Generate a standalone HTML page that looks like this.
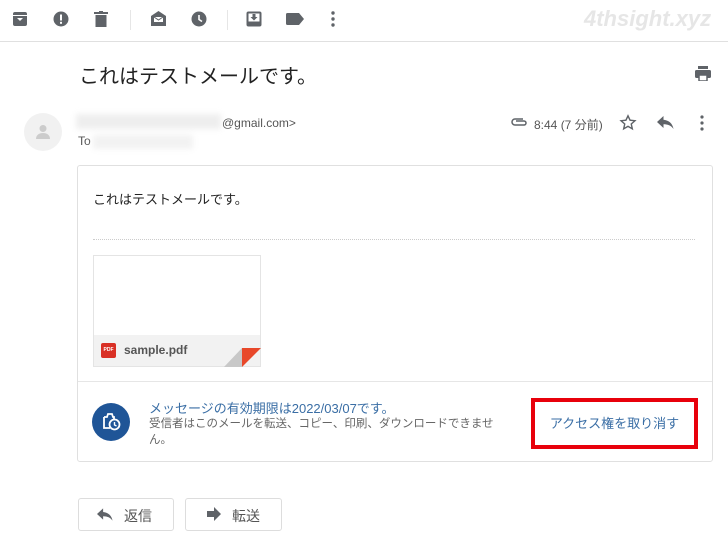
<!DOCTYPE html>
<html><head><meta charset="utf-8"><style>
*{margin:0;padding:0;box-sizing:border-box}
body{width:728px;height:550px;background:#fff;font-family:"Liberation Sans","Noto Sans CJK JP",sans-serif;position:relative;overflow:hidden;color:#222}
.a{position:absolute}
svg{display:block}
</style></head><body>
<div class="a" style="left:0;top:41px;width:728px;height:1px;background:#e0e0e0"></div>
<div class="a" style="left:130px;top:10px;width:1px;height:20px;background:#e6e6e6"></div>
<div class="a" style="left:227px;top:10px;width:1px;height:20px;background:#e6e6e6"></div>
<svg class="a" style="left:12px;top:11px" width="16" height="16" viewBox="0 0 16 16"><rect x="1" y="1" width="14" height="14" rx="2" fill="#5f6368"/><path d="M5 7h6l-3 3z" fill="#fff"/><rect x="1" y="4" width="14" height="1" fill="#fff"/></svg>
<svg class="a" style="left:53px;top:11px" width="16" height="16" viewBox="0 0 16 16"><circle cx="8" cy="8" r="7.5" fill="#5f6368"/><rect x="7" y="3.5" width="2" height="6" fill="#fff"/><rect x="7" y="10.8" width="2" height="2" fill="#fff"/></svg>
<svg class="a" style="left:94px;top:11px" width="14" height="16" viewBox="0 0 14 16"><rect x="0" y="1" width="14" height="2" fill="#5f6368"/><rect x="5" y="0" width="4" height="2" fill="#5f6368"/><rect x="1.5" y="4" width="11" height="12" fill="#5f6368"/></svg>
<svg class="a" style="left:150px;top:10px" width="17" height="17" viewBox="0 0 17 17"><path d="M8.5 1L16 6v10H1V6z" fill="#5f6368"/><path d="M4 7h9v5H4z" fill="#fff"/><path d="M4 7l4.5 3L13 7" stroke="#5f6368" fill="none"/></svg>
<svg class="a" style="left:191px;top:11px" width="16" height="16" viewBox="0 0 16 16"><circle cx="8" cy="8" r="7.5" fill="#5f6368"/><path d="M8 4v4.5l3 2" stroke="#fff" stroke-width="1.6" fill="none"/></svg>
<svg class="a" style="left:246px;top:11px" width="16" height="16" viewBox="0 0 16 16"><rect x="0.5" y="0.5" width="15" height="15" rx="2" fill="#5f6368"/><rect x="2.5" y="2.5" width="11" height="8" fill="#fff"/><path d="M6.5 3h3v3h2L8 9.5 4.5 6h2z" fill="#5f6368"/></svg>
<svg class="a" style="left:286px;top:13px" width="18" height="12" viewBox="0 0 18 12"><path d="M0 1.5A1.5 1.5 0 0 1 1.5 0H13l5 6-5 6H1.5A1.5 1.5 0 0 1 0 10.5z" fill="#5f6368"/></svg>
<svg class="a" style="left:331px;top:11px" width="4" height="16" viewBox="0 0 4 16"><circle cx="2" cy="2" r="1.7" fill="#5f6368"/><circle cx="2" cy="8" r="1.7" fill="#5f6368"/><circle cx="2" cy="14" r="1.7" fill="#5f6368"/></svg>
<div class="a" style="left:584px;top:6px;font:italic bold 22px 'Liberation Sans',sans-serif;color:#e6e6e6">4thsight.xyz</div>
<div class="a" style="left:79px;top:60px;font-size:20px;color:#222">これはテストメールです。</div>
<svg class="a" style="left:695px;top:66px" width="16" height="15" viewBox="0 0 16 15"><rect x="3" y="0" width="10" height="3" fill="#5f6368"/><rect x="0" y="4" width="16" height="8" rx="1.5" fill="#5f6368"/><rect x="4" y="9" width="8" height="6" fill="#fff" stroke="#5f6368" stroke-width="1.5"/></svg>
<div class="a" style="left:24px;top:113px;width:38px;height:38px;border-radius:50%;background:#f1f1f1"></div>
<svg class="a" style="left:36px;top:124px" width="14" height="16" viewBox="0 0 14 16"><circle cx="7" cy="4.5" r="3.5" fill="#ccc"/><path d="M0 15c0-4 3-6 7-6s7 2 7 6z" fill="#ccc"/></svg>
<div class="a" style="left:76px;top:114px;width:145px;height:15px;background:#eee;filter:blur(3px)"></div>
<div class="a" style="left:222px;top:116px;font-size:12px;color:#555">@gmail.com&gt;</div>
<div class="a" style="left:78px;top:134px;font-size:12px;color:#555">To</div>
<div class="a" style="left:93px;top:135px;width:100px;height:14px;background:#f2f2f2;filter:blur(3px)"></div>
<svg class="a" style="left:511px;top:117px" width="16" height="10" viewBox="0 0 16 10"><path d="M12 2H4a3 3 0 0 0 0 6h9a2 2 0 0 0 0-4H5" stroke="#5f6368" stroke-width="1.5" fill="none"/></svg>
<div class="a" style="left:534px;top:116px;font-size:12px;color:#555">8:44 (7 分前)</div>
<svg class="a" style="left:619px;top:114px" width="18" height="17" viewBox="0 0 24 24"><path d="M12 2.5l2.9 6.3 6.9.7-5.2 4.6 1.5 6.8L12 17.4 5.9 20.9l1.5-6.8L2.2 9.5l6.9-.7z" stroke="#5f6368" stroke-width="2" fill="none"/></svg>
<svg class="a" style="left:657px;top:116px" width="17" height="13" viewBox="0 0 17 13"><path d="M6.5 0L0 6l6.5 6V8.3c4.5 0 7.7 1.4 10 4.7C15.6 8.2 12.8 4.6 6.5 3.8z" fill="#5f6368"/></svg>
<svg class="a" style="left:700px;top:115px" width="4" height="16" viewBox="0 0 4 16"><circle cx="2" cy="2" r="1.6" fill="#5f6368"/><circle cx="2" cy="8" r="1.6" fill="#5f6368"/><circle cx="2" cy="14" r="1.6" fill="#5f6368"/></svg>
<div class="a" style="left:77px;top:165px;width:636px;height:297px;border:1px solid #e0e0e0;border-radius:3px"></div>
<div class="a" style="left:93px;top:189px;font-size:13px;color:#222">これはテストメールです。</div>
<div class="a" style="left:93px;top:239px;width:602px;height:0;border-top:1px dotted #ccc"></div>
<div class="a" style="left:93px;top:255px;width:168px;height:112px;border:1px solid #e4e4e4;background:#fff"></div>
<div class="a" style="left:94px;top:335px;width:166px;height:31px;background:#f2f2f2"></div>
<div class="a" style="left:101px;top:343px;width:15px;height:15px;background:#d93025;border-radius:2px;color:#fff;font:bold 5px 'Liberation Sans',sans-serif;line-height:15px;text-align:center">PDF</div>
<div class="a" style="left:124px;top:343px;font:bold 12px 'Liberation Sans',sans-serif;color:#555">sample.pdf</div>
<svg class="a" style="left:224px;top:347px" width="37" height="20" viewBox="0 0 37 20"><path d="M0 20L18 1V20z" fill="#c8c8c8"/><path d="M18 1H37L18 20z" fill="#e8482a"/></svg>
<div class="a" style="left:78px;top:381px;width:634px;height:1px;background:#e6e6e6"></div>
<div class="a" style="left:92px;top:403px;height:38px;border-radius:50%;background:#1f5597;width:38px"></div>
<svg class="a" style="left:100px;top:410px" width="22" height="22" viewBox="0 0 22 22"><path d="M4 7h3l1-3h4l1 3h1v4" stroke="#fff" stroke-width="1.8" fill="none"/><path d="M4 7v11h6" stroke="#fff" stroke-width="1.8" fill="none"/><circle cx="14.5" cy="14.5" r="5" stroke="#fff" stroke-width="1.8" fill="#1f5597"/><path d="M14.5 12v3l2 1" stroke="#fff" stroke-width="1.4" fill="none"/></svg>
<div class="a" style="left:149px;top:398px;font-size:13px;color:#3a6ea5">メッセージの有効期限は2022/03/07です。</div>
<div class="a" style="left:149px;top:416px;white-space:nowrap;font-size:11.5px;line-height:16px;color:#666">受信者はこのメールを転送、コピー、印刷、ダウンロードできませ<br>ん。</div>
<div class="a" style="left:531px;top:398px;width:167px;height:51px;border:4px solid #e8000b"></div>
<div class="a" style="left:531px;top:413px;width:167px;text-align:center;font-size:13px;color:#3a6ea5">アクセス権を取り消す</div>
<div class="a" style="left:78px;top:498px;width:96px;height:33px;border:1px solid #ddd;border-radius:3px"></div>
<svg class="a" style="left:97px;top:508px" width="16" height="13" viewBox="0 0 17 13"><path d="M6.5 0L0 6l6.5 6V8.3c4.5 0 7.7 1.4 10 4.7C15.6 8.2 12.8 4.6 6.5 3.8z" fill="#5f6368"/></svg>
<div class="a" style="left:124px;top:506px;font-size:14px;color:#555">返信</div>
<div class="a" style="left:185px;top:498px;width:97px;height:33px;border:1px solid #ddd;border-radius:3px"></div>
<svg class="a" style="left:207px;top:507px" width="14" height="14" viewBox="0 0 14 14"><path d="M0 4h7V0l7 7-7 7v-4H0z" fill="#5f6368"/></svg>
<div class="a" style="left:232px;top:506px;font-size:14px;color:#555">転送</div>
</body></html>
